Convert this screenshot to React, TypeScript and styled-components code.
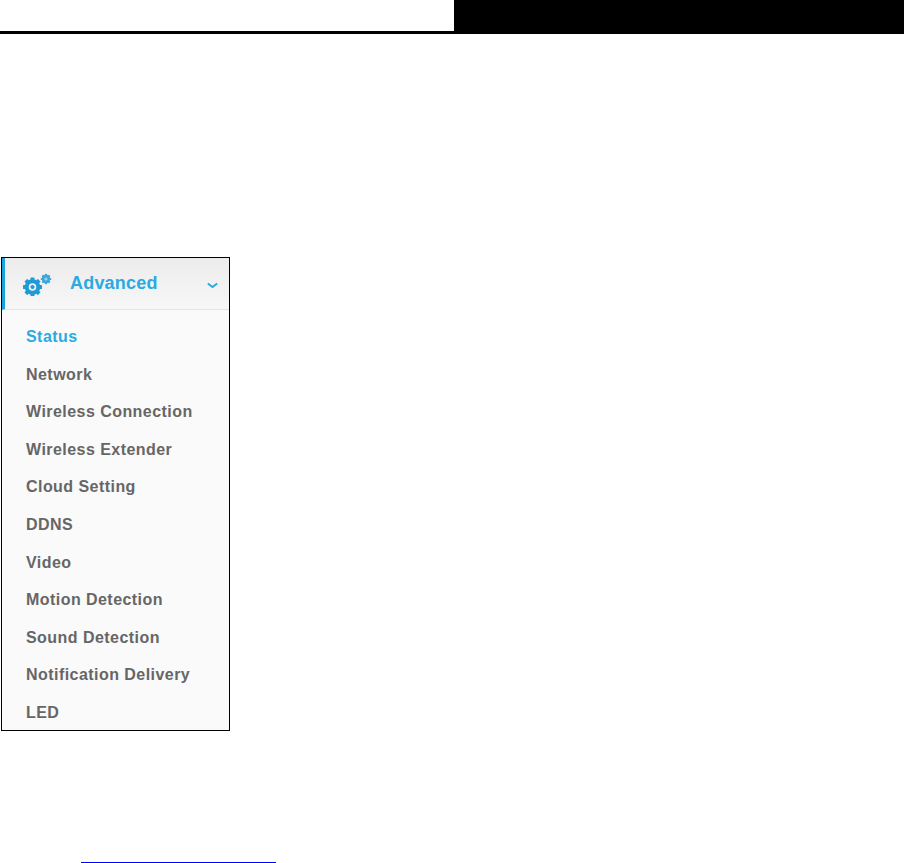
import styled, { createGlobalStyle } from "styled-components";

const GlobalStyle = createGlobalStyle`
  html, body {
    margin: 0;
    padding: 0;
    background: #fff;
    font-family: "Liberation Sans", Arial, sans-serif;
  }
`;

const Page = styled.div`
  width: 904px;
  height: 863px;
  overflow: hidden;
  display: flex;
  flex-direction: column;
`;

const TopBar = styled.div`
  height: 31px;
  display: flex;
  justify-content: flex-end;
  border-bottom: 3px solid #000;
`;

const BlackBlock = styled.div`
  width: 450px;
  background: #000;
`;

const Panel = styled.div`
  width: 227px;
  height: 472px;
  margin: 223px 0 0 1px;
  border: 1px solid #000;
  background: #fafafa;
  flex-shrink: 0;
`;

const MenuHeader = styled.div`
  height: 51px;
  display: flex;
  align-items: center;
  border-left: 3px solid #1aa3dc;
  border-bottom: 1px solid #e4e4e4;
  background: linear-gradient(#ececec, #f7f7f7);
  padding: 0 11px 0 17px;
  color: #2aaae2;
`;

const HeaderTitle = styled.span`
  font-size: 18px;
  font-weight: 700;
  letter-spacing: 0.2px;
  margin-left: 18px;
  flex: 1;
`;

const MenuList = styled.ul`
  list-style: none;
  margin: 0;
  padding: 8px 0 0 24px;
`;

const MenuItem = styled.li<{ $active?: boolean }>`
  height: 37.6px;
  line-height: 37.6px;
  font-size: 16px;
  font-weight: 700;
  letter-spacing: 0.45px;
  white-space: nowrap;
  color: ${(props) => (props.$active ? "#2aaae2" : "#666666")};
`;

const LinkLine = styled.div`
  width: 195px;
  height: 1px;
  margin: 131px 0 0 81px;
  background: #0000ff;
  flex-shrink: 0;
`;

const ChevronSvg = styled.svg`
  margin-top: 3px;
`;

function GearIcon() {
  const teeth = (cx: number, cy: number, r: number, w: number, n: number) =>
    Array.from({ length: n }, (_, i) => (
      <rect
        key={i}
        x={cx - w / 2}
        y={cy - r}
        width={w}
        height={r * 2}
        rx={0.6}
        transform={`rotate(${(180 / n) * i} ${cx} ${cy})`}
      />
    ));
  return (
    <svg width="30" height="24" viewBox="0 0 30 24" fill="#1e9bd7">
      {teeth(10.5, 15, 9.5, 4, 4)}
      <circle cx="10.5" cy="15" r="7.8" />
      <circle cx="10.5" cy="15" r="3.8" fill="#f2f2f2" />
      <circle cx="10.5" cy="15" r="2.1" />
      <g opacity="0.85">
        {teeth(24, 7, 5.2, 2.2, 4)}
        <circle cx="24" cy="7" r="4.2" />
        <circle cx="24" cy="7" r="1.6" fill="#8ccbea" />
      </g>
    </svg>
  );
}

function ChevronIcon() {
  return (
    <ChevronSvg width="11" height="7" viewBox="0 0 11 7" fill="none">
      <path d="M0.8 1.5 L5.5 5 L10.2 1.5" stroke="#2aaae2" strokeWidth="2" />
    </ChevronSvg>
  );
}

const items = [
  "Status",
  "Network",
  "Wireless Connection",
  "Wireless Extender",
  "Cloud Setting",
  "DDNS",
  "Video",
  "Motion Detection",
  "Sound Detection",
  "Notification Delivery",
  "LED",
];

export default function App() {
  return (
    <Page>
      <GlobalStyle />
      <TopBar>
        <BlackBlock />
      </TopBar>
      <Panel>
        <MenuHeader>
          <GearIcon />
          <HeaderTitle>Advanced</HeaderTitle>
          <ChevronIcon />
        </MenuHeader>
        <MenuList>
          {items.map((item, i) => (
            <MenuItem key={item} $active={i === 0}>
              {item}
            </MenuItem>
          ))}
        </MenuList>
      </Panel>
      <LinkLine />
    </Page>
  );
}
